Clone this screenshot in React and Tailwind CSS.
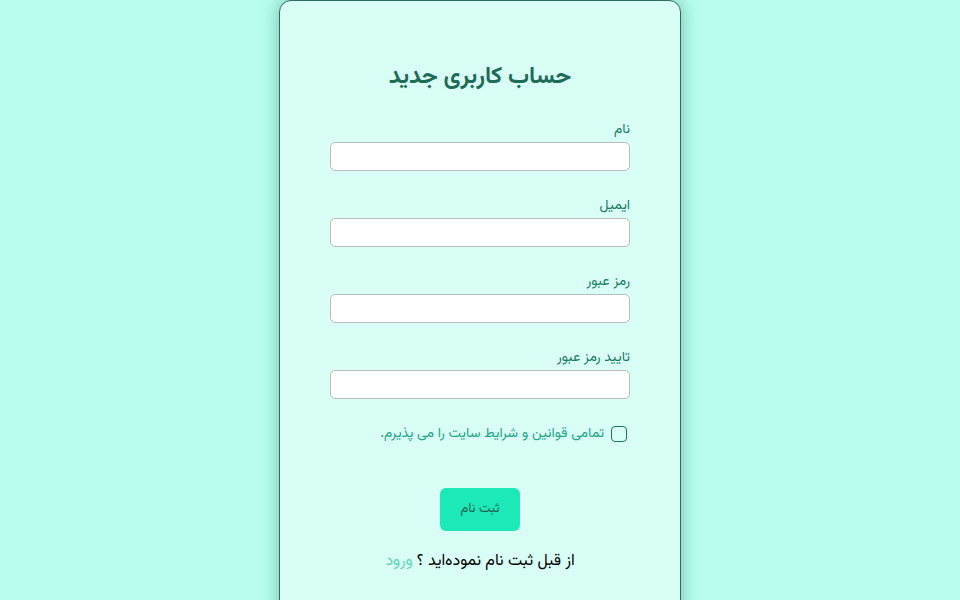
import React, { useState } from 'react';

const fields = [
  { id: 'name', label: 'نام', type: 'text' },
  { id: 'email', label: 'ایمیل', type: 'email' },
  { id: 'password', label: 'رمز عبور', type: 'password' },
  { id: 'confirm', label: 'تایید رمز عبور', type: 'password' },
];

const Field = ({ field }) => (
  <div className="flex flex-col">
    <label htmlFor={field.id} className="text-sm leading-5 text-[#187a62] mb-[2px]">
      {field.label}
    </label>
    <input
      id={field.id}
      type={field.type}
      className="h-[29px] w-full rounded-[5px] border border-[#b9bdbc] bg-white px-2 text-sm outline-none"
    />
  </div>
);

export default function App() {
  const [accepted, setAccepted] = useState(false);

  return (
    <div
      dir="rtl"
      className="min-h-screen h-[600px] overflow-hidden bg-[#b8fdee] font-['Vazirmatn','Noto_Sans_Arabic','DejaVu_Sans',sans-serif]"
    >
      <div className="mx-auto w-[402px] h-[640px] rounded-xl border border-[#2f6b5e] bg-[#d9fef6] shadow-[0_0_18px_rgba(30,110,90,0.45)] px-[50px] pt-[59px]">
        <h1 className="text-center text-[23.5px] font-bold leading-[36px] text-[#1e6b58]">
          حساب کاربری جدید
        </h1>

        <form className="mt-[24px] flex flex-col gap-[25px]" onSubmit={(e) => e.preventDefault()}>
          {fields.map((f) => (
            <Field key={f.id} field={f} />
          ))}

          <label className="flex items-center gap-[7px] pr-[3px] text-sm text-[#1ea486]">
            <span
              onClick={() => setAccepted(!accepted)}
              className="h-4 w-4 rounded-[4px] border border-[#187a5c] bg-transparent"
            ></span>
            تمامی قوانین و شرایط سایت را می پذیرم.
          </label>

          <div className="mt-[19px] flex justify-center">
            <button
              type="submit"
              className="h-[43px] w-[80px] rounded-md bg-[#1de8b8] text-[13px] text-[#1d5e4e]"
            >
              ثبت نام
            </button>
          </div>
        </form>

        <p className="mt-[19px] text-center text-base text-black">
          از قبل ثبت نام نموده‌اید ؟ <a href="#" className="text-[#5fd6b5]">ورود</a>
        </p>
      </div>
    </div>
  );
}
